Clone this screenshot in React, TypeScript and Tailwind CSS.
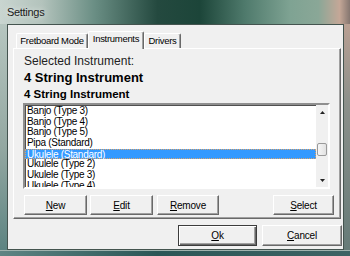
import React from 'react';

const ITEMS = [
  'Banjo (Type 3)',
  'Banjo (Type 4)',
  'Banjo (Type 5)',
  'Pipa (Standard)',
  'Ukulele (Standard)',
  'Ukulele (Type 2)',
  'Ukulele (Type 3)',
  'Ukulele (Type 4)',
];
const SELECTED = 4;

const ui = "font-['Liberation_Sans',Arial,sans-serif]";

function Btn({
  label,
  w,
  isDefault,
  className = '',
}: {
  label: string;
  w: string;
  isDefault?: boolean;
  className?: string;
}) {
  return (
    <div
      className={`${w} flex items-center justify-center bg-[#f0f0f0] text-[10px] tracking-[-0.2px] text-black ${
        isDefault
          ? 'border border-[#3c3c3c] shadow-[inset_1px_1px_0_#fff,inset_-1px_-1px_0_#696969,inset_-2px_-2px_0_#a0a0a0]'
          : 'border border-t-white border-l-white border-r-[#696969] border-b-[#696969] shadow-[inset_-1px_-1px_0_#a0a0a0]'
      } ${className}`}
    >
      <span>
        <span className="underline underline-offset-1">{label[0]}</span>
        {label.slice(1)}
      </span>
    </div>
  );
}

function Arrow({ down }: { down?: boolean }) {
  return (
    <svg width="5" height="3" viewBox="0 0 5 3" className="block">
      <path d={down ? 'M0 0h5L2.5 3z' : 'M0 3h5L2.5 0z'} fill="#222" />
    </svg>
  );
}

function Tab({ label, selected, w }: { label: string; selected?: boolean; w: string }) {
  return (
    <div
      className={`${w} flex items-center justify-center border-t border-l border-t-white border-l-white border-r border-r-[#696969] shadow-[inset_-1px_0_0_#a0a0a0] rounded-t-[2px] bg-[#f0f0f0] text-[9.5px] tracking-[-0.3px] text-black whitespace-nowrap ${
        selected ? 'h-[18px] relative z-10 -mb-px pb-[2px]' : 'mt-[2px] h-[15px]'
      }`}
    >
      {label}
    </div>
  );
}

export default function App() {
  return (
    <div
      className={`${ui} w-[350px] h-[256px] overflow-hidden flex flex-col bg-[linear-gradient(90deg,#c9d5d0_0%,#b3c3bc_12%,#6a8e84_27%,#24493f_45%,#1c4539_57%,#4f7a6c_70%,#7fa393_83%,#8aa797_91%,#c4a797_97%,#857670_100%)]`}
    >
      {/* title bar */}
      <div className="h-[24px] shrink-0 flex items-center pl-[7px] pt-[1px]">
        <span className="text-[11px] tracking-[-0.3px] text-[#1b1b1b] [text-shadow:0_0_6px_rgba(255,255,255,0.8)]">
          Settings
        </span>
      </div>

      <div className="flex h-[226px] shrink-0">
        <div className="w-[7px] bg-[linear-gradient(180deg,#b6c6c0,#93a7a1_55%,#5d8482)]" />

        {/* client area */}
        <div className="w-[337px] border border-[#44544f] bg-[#f0f0f0] flex flex-col">
          {/* tab strip */}
          <div className="flex pt-[6px] pl-[8px] h-[23px]">
            <Tab label="Fretboard Mode" w="w-[72px]" />
            <Tab label="Instruments" selected w="w-[56px]" />
            <Tab label="Drivers" w="w-[37px]" />
          </div>

          {/* tab panel */}
          <div className="ml-[5px] w-[328px] h-[171px] border-t border-l border-t-white border-l-white border-r border-b border-r-[#696969] border-b-[#696969] shadow-[inset_-1px_-1px_0_#a0a0a0] flex flex-col pl-[9px]">
            <div className="pt-[5px] pl-px h-[19px] leading-[14px] text-[12px] text-[#222]">
              Selected Instrument:
            </div>
            <div className="mt-[3px] pl-px h-[14px] leading-[14px] text-[13px] font-bold text-black">
              4 String Instrument
            </div>
            <div className="mt-[2px] pl-px h-[14px] leading-[14px] text-[11.5px] font-bold text-black">
              4 String Instrument
            </div>

            {/* listbox */}
            <div className="mt-[2px] w-[307px] h-[86px] border-2 border-t-[#8f8f8f] border-l-[#8f8f8f] border-r-white border-b-white shadow-[inset_1px_1px_0_#505050] bg-white flex overflow-hidden">
              <div className="flex-1 pt-px overflow-hidden">
                {ITEMS.map((it, i) => (
                  <div
                    key={it}
                    className={`h-[10.7px] leading-[10.7px] pl-[2px] text-[10px] tracking-[-0.3px] whitespace-nowrap ${
                      i === SELECTED
                        ? 'bg-[#3399ff] text-white border border-dotted border-[#dba36c] pl-px leading-[8.7px]'
                        : 'text-black'
                    }`}
                  >
                    {it}
                  </div>
                ))}
              </div>
              <div className="w-[12px] bg-[#f0f0f0] flex flex-col">
                <div className="h-[12px] flex items-center justify-center pt-[2px]">
                  <Arrow />
                </div>
                <div className="h-[26px]" />
                <div className="h-[13px] mx-px rounded-[2px] border border-[#9a9a9a] bg-[linear-gradient(90deg,#f6f6f6,#e2e2e2)]" />
                <div className="flex-1" />
                <div className="h-[12px] flex items-center justify-center pb-[2px]">
                  <Arrow down />
                </div>
              </div>
            </div>

            {/* list buttons */}
            <div className="mt-[6px] h-[20px] flex pl-px pr-[6px]">
              <Btn label="New" w="w-[63px]" />
              <Btn label="Edit" w="w-[63px]" className="ml-[3px]" />
              <Btn label="Remove" w="w-[62px]" className="ml-[4px]" />
              <Btn label="Select" w="w-[61px]" className="ml-auto" />
            </div>
          </div>

          {/* dialog buttons */}
          <div className="mt-[6px] flex justify-end pr-px h-[21px]">
            <Btn label="Ok" w="w-[79px]" isDefault />
            <Btn label="Cancel" w="w-[80px]" className="ml-[5px]" />
          </div>
        </div>

        <div className="flex-1 bg-[linear-gradient(180deg,#b9a093,#8c908b_35%,#667b78)]" />
      </div>

      <div className="flex-1 bg-[linear-gradient(90deg,#5e8483,#2b5656_45%,#3d6364)] border-t border-t-[#9fb3ae]" />
    </div>
  );
}
